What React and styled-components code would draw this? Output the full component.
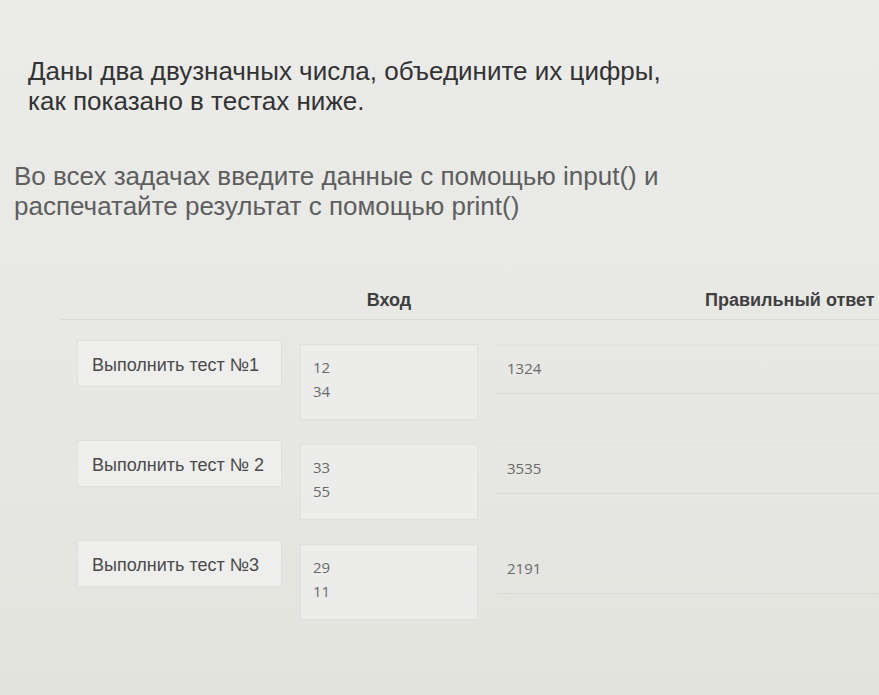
import React from "react";
import styled, { createGlobalStyle } from "styled-components";

const Global = createGlobalStyle`
  html, body { margin: 0; padding: 0; }
  body {
    background: linear-gradient(180deg, #ebebe9 0%, #e8e8e5 45%, #e3e3de 100%);
    min-height: 695px;
    font-family: "Liberation Sans", Arial, sans-serif;
    overflow: hidden;
  }
`;

const Page = styled.div`
  width: 879px;
  height: 695px;
  padding-top: 56px;
  box-sizing: border-box;
`;

const Title = styled.h1`
  margin: 0 0 45px 28px;
  font-size: 26px;
  line-height: 30px;
  font-weight: 400;
  color: #333333;
`;

const Para = styled.p`
  margin: 0 0 69px 14px;
  font-size: 26px;
  line-height: 30px;
  color: #5e5e5e;
`;

const Table = styled.div`
  padding-left: 60px;
`;

const HeaderRow = styled.div`
  display: grid;
  grid-template-columns: 205px 178px 1fr;
  column-gap: 18px;
  padding: 0 0 8px 17px;
  border-bottom: 1px solid #dadad7;
  margin-bottom: 20px;
`;

const HeadCell = styled.div`
  font-size: 18px;
  line-height: 21px;
  font-weight: 700;
  color: #3f3f3f;
  text-align: ${(p) => p.$align || "left"};
  padding-left: ${(p) => p.$indent || 0}px;
  white-space: nowrap;
`;

const Row = styled.div`
  display: grid;
  grid-template-columns: 205px 178px 1fr;
  column-gap: 18px;
  align-items: start;
  padding-left: 17px;
  margin-bottom: 20px;
`;

const RunButton = styled.div`
  height: 47px;
  box-sizing: border-box;
  display: flex;
  align-items: center;
  padding: 4px 0 0 14px;
  background: #eeeeec;
  border: 1px solid #dfdfdc;
  font-size: 18px;
  color: #4a4a4a;
  white-space: nowrap;
`;

const InputCell = styled.div`
  margin-top: 4px;
  height: 76px;
  box-sizing: border-box;
  padding: 10px 12px;
  background: #ececea;
  border: 1px solid #e0e0dd;
  font-family: "Open Sans", "Liberation Sans", sans-serif;
  font-size: 15px;
  line-height: 24px;
  color: #6a6a6a;
`;

const AnswerCell = styled.div`
  margin-top: 4px;
  height: 50px;
  box-sizing: border-box;
  padding: 11px 11px;
  border-top: 1px solid #e2e2df;
  border-bottom: 1px solid #d9d9d6;
  font-family: "Open Sans", "Liberation Sans", sans-serif;
  font-size: 15px;
  line-height: 24px;
  color: #6a6a6a;
`;

const tests = [
  { label: "Выполнить тест №1", input: ["12", "34"], answer: "1324" },
  { label: "Выполнить тест № 2", input: ["33", "55"], answer: "3535" },
  { label: "Выполнить тест №3", input: ["29", "11"], answer: "2191" },
];

export default function App() {
  return (
    <>
      <Global />
      <Page>
        <Title>
          Даны два двузначных числа, объедините их цифры,
          <br />
          как показано в тестах ниже.
        </Title>
        <Para>
          Во всех задачах введите данные с помощью input() и
          <br />
          распечатайте результат с помощью print()
        </Para>
        <Table>
          <HeaderRow>
            <HeadCell />
            <HeadCell $align="center">Вход</HeadCell>
            <HeadCell $indent={209}>Правильный ответ</HeadCell>
          </HeaderRow>
          {tests.map((t) => (
            <Row key={t.label}>
              <RunButton>{t.label}</RunButton>
              <InputCell>
                {t.input.map((v, i) => (
                  <div key={i}>{v}</div>
                ))}
              </InputCell>
              <AnswerCell>{t.answer}</AnswerCell>
            </Row>
          ))}
        </Table>
      </Page>
    </>
  );
}
